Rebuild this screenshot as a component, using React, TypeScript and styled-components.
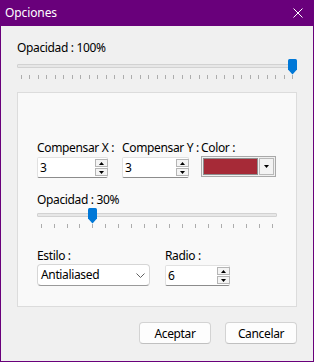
import React from "react";
import styled, { createGlobalStyle } from "styled-components";

const PURPLE = "#69007b";
const FONT = `"Noto Sans", "Segoe UI", sans-serif`;

const Global = createGlobalStyle`
  html, body { margin: 0; padding: 0; background: #f0f0f0; }
  body { font-family: ${FONT}; font-size: 12px; color: #000; letter-spacing: -0.35px; }
  * { box-sizing: border-box; }
`;

const Window = styled.div`
  width: 314px;
  height: 362px;
  display: flex;
  flex-direction: column;
  background: ${PURPLE};
  padding: 0 1px 1px 1px;
`;

const TitleBar = styled.div`
  height: 26px;
  flex: none;
  display: flex;
  align-items: center;
  justify-content: space-between;
  padding: 0 10px 0 4px;
  color: #fff;
`;

const Title = styled.span`
  font-size: 12px;
  line-height: 16px;
  letter-spacing: -0.1px;
`;

const Body = styled.div`
  flex: 1;
  background: #f0f0f0;
  padding: 14px 16px 0 16px;
  display: flex;
  flex-direction: column;
`;

const Label = styled.div<{ $mt?: number }>`
  height: 16px;
  line-height: 16px;
  white-space: nowrap;
  margin-top: ${(p) => p.$mt ?? 0}px;
`;

const SliderWrap = styled.div<{ $w: number; $mt: number }>`
  position: relative;
  width: ${(p) => p.$w}px;
  height: 21px;
  margin-top: ${(p) => p.$mt}px;
  flex: none;
`;

const Track = styled.div`
  margin-top: 5px;
  height: 4px;
  background: #e7e7e7;
  border: 1px solid #d2d2d2;
  border-radius: 1px;
`;

const Ticks = styled.div`
  margin-top: 7px;
  height: 4px;
  padding: 0 4px;
  display: flex;
  justify-content: space-between;
`;

const Tick = styled.span`
  width: 1px;
  height: 4px;
  background: #adadad;
`;

const ThumbBox = styled.div`
  position: absolute;
  top: 0;
  width: 9px;
  height: 16px;
`;

const Panel = styled.div`
  margin-top: 12px;
  background: #f9f9f9;
  border: 1px solid #dcdcdc;
  padding: 47px 19px 20px 19px;
  display: flex;
  flex-direction: column;
`;

const FieldRow = styled.div<{ $cols: string; $mt?: number }>`
  display: grid;
  grid-template-columns: ${(p) => p.$cols};
  margin-top: ${(p) => p.$mt ?? 0}px;
`;

const Field = styled.div`
  display: flex;
  flex-direction: column;
`;

const TextBox = styled.div<{ $w: number }>`
  width: ${(p) => p.$w}px;
  height: 21px;
  margin-top: 1px;
  display: flex;
  align-items: center;
  background: #fff;
  border: 1px solid #e1e1e1;
  border-bottom-color: #8c8c8c;
  border-radius: 2px;
  padding-left: 2px;
`;

const Value = styled.span`
  flex: 1;
  line-height: 16px;
`;

const SpinCol = styled.div`
  display: flex;
  flex-direction: column;
  gap: 1px;
  margin-right: -1px;
`;

const SpinBtn = styled.div`
  width: 13px;
  height: 8px;
  background: #f4f4f4;
  border: 1px solid #b5b5b5;
  display: flex;
  align-items: center;
  justify-content: center;
`;

const ColorBox = styled.div`
  width: 75px;
  height: 21px;
  display: flex;
  gap: 1px;
  padding: 1px;
  background: #f0f0f0;
  border: 1px solid #a9a9a9;
`;

const Swatch = styled.div<{ $c: string }>`
  flex: 1;
  background: ${(p) => p.$c};
  border: 1px solid #8f8f8f;
`;

const DropBtn = styled.div`
  width: 15px;
  background: #f3f3f3;
  border: 1px solid #b9b9b9;
  display: flex;
  align-items: center;
  justify-content: center;
`;

const Combo = styled.div`
  width: 113px;
  height: 22px;
  display: flex;
  align-items: center;
  justify-content: space-between;
  background: #fff;
  border: 1px solid #d6d6d6;
  border-bottom-color: #9a9a9a;
  border-radius: 4px;
  padding: 0 4px 0 3px;
`;

const ButtonRow = styled.div`
  margin-top: 15px;
  display: flex;
  justify-content: flex-end;
  gap: 14px;
`;

const Button = styled.button`
  width: 72px;
  height: 22px;
  padding: 0;
  font-family: ${FONT};
  font-size: 12px;
  letter-spacing: -0.35px;
  color: #000;
  background: #fdfdfd;
  border: 1px solid #d3d3d3;
  border-bottom-color: #c0c0c0;
  border-radius: 4px;
`;

const Tri = ({ up }: { up?: boolean }) => (
  <svg width="5" height="3" viewBox="0 0 5 3">
    <path d={up ? "M0 3 L2.5 0 L5 3 Z" : "M0 0 L5 0 L2.5 3 Z"} fill="#000" />
  </svg>
);

const Spin = () => (
  <SpinCol>
    <SpinBtn>
      <Tri up />
    </SpinBtn>
    <SpinBtn>
      <Tri />
    </SpinBtn>
  </SpinCol>
);

const Slider = ({ width, ticks, index, mt }: { width: number; ticks: number; index: number; mt: number }) => {
  const left = ((width - 9) * index) / (ticks - 1);
  return (
    <SliderWrap $w={width} $mt={mt}>
      <Track />
      <Ticks>
        {Array.from({ length: ticks }).map((_, i) => (
          <Tick key={i} />
        ))}
      </Ticks>
      <ThumbBox style={{ left }}>
        <svg width="9" height="16" viewBox="0 0 9 16">
          <path d="M1.5 0 H7.5 Q9 0 9 1.5 V10.5 L4.5 15.5 L0 10.5 V1.5 Q0 0 1.5 0 Z" fill="#0078d7" />
        </svg>
      </ThumbBox>
    </SliderWrap>
  );
};

export default function App() {
  return (
    <>
      <Global />
      <Window>
        <TitleBar>
          <Title>Opciones</Title>
          <svg width="10" height="10" viewBox="0 0 10 10">
            <path d="M0.5 0.5 L9.5 9.5 M9.5 0.5 L0.5 9.5" stroke="#fff" strokeWidth="1" />
          </svg>
        </TitleBar>
        <Body>
          <Label>Opacidad : 100%</Label>
          <Slider width={280} ticks={33} index={32} mt={3} />
          <Panel>
            <FieldRow $cols="85px 79px 1fr">
              <Field>
                <Label>Compensar X :</Label>
                <TextBox $w={71}>
                  <Value>3</Value>
                  <Spin />
                </TextBox>
              </Field>
              <Field>
                <Label>Compensar Y :</Label>
                <TextBox $w={67}>
                  <Value>3</Value>
                  <Spin />
                </TextBox>
              </Field>
              <Field>
                <Label>Color :</Label>
                <ColorBox>
                  <Swatch $c="#a62a37" />
                  <DropBtn>
                    <Tri />
                  </DropBtn>
                </ColorBox>
              </Field>
            </FieldRow>
            <Label $mt={14}>Opacidad : 30%</Label>
            <Slider width={240} ticks={19} index={4} mt={0} />
            <FieldRow $cols="128px 1fr" $mt={19}>
              <Field>
                <Label>Estilo :</Label>
                <Combo>
                  <Value>Antialiased</Value>
                  <svg width="9" height="5" viewBox="0 0 9 5">
                    <path d="M0.5 0.5 L4.5 4.5 L8.5 0.5" stroke="#606060" strokeWidth="1" fill="none" />
                  </svg>
                </Combo>
              </Field>
              <Field>
                <Label>Radio :</Label>
                <TextBox $w={65}>
                  <Value>6</Value>
                  <Spin />
                </TextBox>
              </Field>
            </FieldRow>
          </Panel>
          <ButtonRow>
            <Button>Aceptar</Button>
            <Button>Cancelar</Button>
          </ButtonRow>
        </Body>
      </Window>
    </>
  );
}
